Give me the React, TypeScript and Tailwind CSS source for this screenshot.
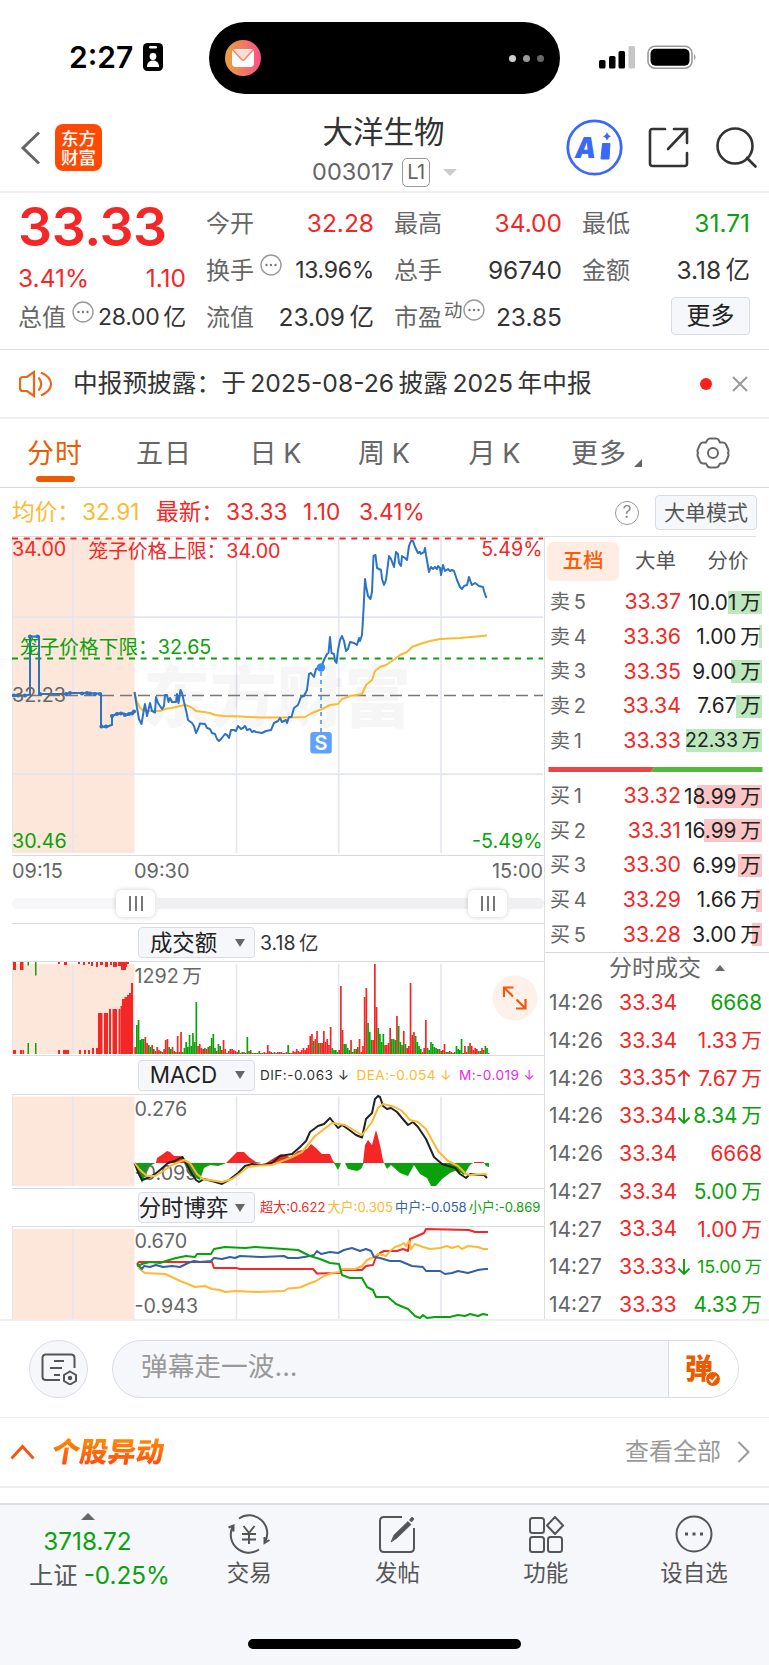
import type { ReactNode } from 'react';
import clsx from 'clsx';

const RED = '#f52626';
const GREEN = '#0aa20a';
const GRID = '#e3e6ee';
const YELLOW = '#fdb933';

// Thin gap where Chinese characters meet digits or latin letters
const spaced = (s: string) =>
  s.replace(/([\u4e00-\u9fff])([\dA-Z])/g, '$1\u2009$2').replace(/([\dA-Z])([\u4e00-\u9fff])/g, '$1\u2009$2');

/* ---------- data ---------- */

type Level = { side: string; price: string; amount: string; bar: number };

const asks: Level[] = [
  { side: '卖5', price: '33.37', amount: '10.01万', bar: 34 },
  { side: '卖4', price: '33.36', amount: '1.00万', bar: 3 },
  { side: '卖3', price: '33.35', amount: '9.00万', bar: 31 },
  { side: '卖2', price: '33.34', amount: '7.67万', bar: 26 },
  { side: '卖1', price: '33.33', amount: '22.33万', bar: 76 },
];

const bids: Level[] = [
  { side: '买1', price: '33.32', amount: '18.99万', bar: 65 },
  { side: '买2', price: '33.31', amount: '16.99万', bar: 58 },
  { side: '买3', price: '33.30', amount: '6.99万', bar: 24 },
  { side: '买4', price: '33.29', amount: '1.66万', bar: 6 },
  { side: '买5', price: '33.28', amount: '3.00万', bar: 10 },
];

const trades = [
  { time: '14:26', price: '33.34', amount: '6668', up: false },
  { time: '14:26', price: '33.34', amount: '1.33万', up: true },
  { time: '14:26', price: '33.35', amount: '7.67万', up: true, dir: 'up' },
  { time: '14:26', price: '33.34', amount: '8.34万', up: false, dir: 'down' },
  { time: '14:26', price: '33.34', amount: '6668', up: true },
  { time: '14:27', price: '33.34', amount: '5.00万', up: false },
  { time: '14:27', price: '33.34', amount: '1.00万', up: true },
  { time: '14:27', price: '33.33', amount: '15.00万', up: false, dir: 'down', small: true },
  { time: '14:27', price: '33.33', amount: '4.33万', up: false },
];

// Per-minute turnover, positive = red bar, negative = green bar
const volume = [
  7, -29, -34, -14, -15, -15, 17, 11, -9, -7, 9, -5, 3, 7, 4, -3, 2, 5, 14, 15, -7, -5, 7, 3, -2, 18, 2, 22, -2, -6,
  -12, -7, -19, -8, -21, -12, -52, 8, 10, 6, 5, -6, 5, 7, -8, -16, -20, -6, 3, -10, -8, 4, 14, 5, -1, 3, 5, 5, 4, 3,
  2, -4, 1, 2, -2, 1, -17, 3, -4, 1, 1, -1, 1, -3, 1, 1, 2, 1, 9, 3, 2, 1, -2, 1, 2, 2, 2, 1, 1, 2,
  -9, 1, 1, 3, 2, 5, 3, 2, 4, 6, 4, 6, 9, 18, 20, -13, 15, 23, -11, 11, 11, 23, 12, 15, 9, 27, -6, -4, -4, -2,
  4, 68, 24, -10, -10, -6, -4, 14, -2, -5, 5, -7, 15, 2, 8, 57, 66, -31, -22, -14, 14, 90, 47, -26, -20, -12, -20, 9, 9, 11,
  26, -15, -15, -14, 38, -28, -12, -9, 23, -10, 6, 8, 71, 19, 22, -18, -12, -8, -5, 2, 6, 34, -6, -4, -12, -10, -7, -6, -5, 5,
  -3, 4, 10, -2, -2, 3, 2, 1, -2, -8, -5, -4, -15, 1, 8, 2, -8, 11, 8, 4, 6, 5, -3, -3, 6, 4, -8, -6, -1,
];

// [x, width, height] bars of the call auction
const auctionRed = [
  [13, 3, 4], [20, 2, 4], [22.5, 1.5, 4], [58, 2, 4], [63, 6, 4], [79, 2, 4], [84, 2, 4], [88, 2, 4], [92, 2, 6], [96, 2, 6],
  [98, 4.5, 41], [104, 4, 41], [109, 2, 45], [112.5, 4.5, 45], [118.5, 2, 45], [120.5, 1.5, 48], [122, 3, 55],
  [124.5, 3, 57], [127, 2, 59], [129, 2, 61], [131, 2, 71],
];
const auctionTop = [
  [13, 3, 8], [20, 3.5, 8], [58, 2, 2], [64, 3, 3], [78, 2, 2], [83, 2, 3], [88, 2, 2], [91, 2, 4], [96, 2, 5],
  [100, 3, 3], [105, 3, 5], [110, 2, 3], [113, 4, 5], [118, 3, 4], [121, 5, 8], [125, 2, 5], [127, 2, 2],
];

const auctionLine =
  '12,695.5 26,695.5 30,694.5 30,636.5 39,636.5 39,694 60,694 66,694 70,693 80,693 97,693.5 101,694 101,727 108,726.5 110,725.5 112,725 112,716 118,713.5 124,713.5 127,715 130,713.5 132,714 135,711';
const auctionDots = [
  [14, 695.5], [18, 695.5], [25, 695.5], [30, 636.5], [37.5, 636.5], [40, 694], [66, 694], [70, 693], [82, 693.5], [87, 693],
  [90, 693.5], [95, 694], [100, 694], [101.5, 726.5], [106, 726.5], [112, 716], [117, 714], [121, 713.5], [125, 715],
  [129, 714], [132, 713.5], [134, 711.5],
];
const priceLine =
  '134.5,692 137,708 139,719 141.5,724 144,709 145,704 147,716 150,703 152,711 155,712.5 156,697 158,703 160,706 162,709 164,706 165,695 167,695 168.5,702 170,698 172,702 176,702 177,694 178.5,703 180.5,690 182,693 184,702 186,710 188,720 192,723 194,726 196,733 198,729 200,723.5 205,724 207,728 210,729 212,733 215,734 217,739 219,741 221,739 225,734 227,735 229,738 231,730 234,730 236,731 238,726 241,729 243,728 245,726 247,730 250,729 252,732 254,731 256,732 262,733 266,731 271,730 274,723 278,721 280,718 282,722 286,720 287,723 289,717 291.5,717 294,708 298,705 301,697 304,696 307,690 309,674 311,673 314,677 316,669 321,667 324,660 327,654 328.5,653 330,637 331.5,653 334,654 335,661 336.5,663 338,650 340,640 342,636 344,641 346,651 348,649 350,642 354,643 357,645 359,638 360,641 362,635 363.5,610 365,579 366,586 368,596 370.5,599 372,592 373.5,556 375.5,555 377,568 381,570 382,579 384,585 386,580 389,556 391,559 394,567 396,552 398,554 399,563 401,566 402,556 405,558 407,560 409,546 411,541 413,541 415,547 418,553 420,552 421,554 424,552 425,548 426,555 429,572 431,567 433,569 435,567 437,569 438,566 440,568 441,575 443,565 445,571 448,569 450,571 452,570 454,571 457,580 460,587 462,589 464,586 467,585 469,577 471,583 472,585 475,583 479,586 483,587 484,591 486,597 487,597.5';
const avgLine =
  '134.5,692 137,702 140,708 144,711 152,711 160,711 165,709 172,708 180,706 185,705 191,707 196,711 204,712 210,713 215,715 225,716 240,716.5 260,717.5 290,717.5 305,717 312,713 322,709 330,705 338,704 342,699 350,696 362,694 366,685 372,680 375,671 380,667 386,665 395,659 400,655 407,652 412,647 420,644 430,641 440,639 460,638 487,635.5';

const difLine =
  '134.5,1163 138,1172 142,1180 148,1178 155,1174 160,1170 168,1163 175,1161 180,1158 182.5,1157 187,1165 192,1174 196,1180 199,1182 204,1179 212,1181 222,1184 229,1180 238,1173 245,1166 252,1164 262,1165 272,1163 280,1156 292,1154 300,1147 306,1141 310,1132 318,1126 324,1124 330,1118 338,1128 342,1125 348,1129 356,1135 362,1137.5 366,1119 372,1113 375,1099 378,1096 380,1097 383,1106 387,1109 391,1108 397,1112 402,1118 408,1125 413,1122 418,1127 426,1139 434,1157 442,1164 455,1168 460,1174 466,1178 470,1174 478,1175 484,1175 487,1178';
const deaLine =
  '134.5,1163 140,1170 147,1176 155,1176 165,1170 172,1165 184,1160 190,1163 197,1174 203,1179 222,1182 232,1179 242,1172 248,1167 260,1165.5 272,1165 290,1158 302,1152 315,1136 332,1123 345,1125 362,1135 372,1122 378,1108 383,1104 395,1107 402,1111 410,1120 418,1122 426,1129 438,1151 448,1161 458,1166 466,1174 470,1175 485,1174 487,1175';
const macdUp = [
  '156,1163 157,1158 163,1154 167,1151 170,1152 174,1156 180,1156 184,1159 185,1163',
  '226,1163 231,1158 237,1152 244,1152 249,1157 256,1162 262,1163',
  '266,1163 274,1158 281,1154 290,1157 298,1151 307,1149 311,1144 316,1148 322,1154 330,1154 333,1161 335,1163',
  '363,1163 365,1145 368,1140 372,1145 376,1130 378,1137 380,1145 383,1160 384,1163',
  '474,1163 474,1162 484,1162 484,1163',
];
const macdDown = [
  '134,1163 138,1174 142,1183 147,1172 150,1166 155,1163',
  '184,1163 190,1176 196,1178 200,1180 204,1168 210,1165 218,1166 224,1164 226,1163',
  '334,1163 338,1170 341,1163',
  '345,1163 348,1169 357,1171 361,1169 364,1163',
  '384,1163 387,1169 391,1165 400,1173 408,1176 414,1165 420,1174 427,1178 431,1186 436,1186 442,1179 450,1173 457,1170 464,1175 470,1165 473,1163',
  '484,1163 486,1166 489,1167 489,1163',
];

const gameRed =
  '137,1264 139,1262 212,1262 214,1268 236,1268 240,1269 313,1269 317,1273.5 340,1273 342,1270 362,1270 366,1266 373,1265 376,1257 380,1253 384,1251 397,1251 403,1249 408,1251 410,1239 415,1237 424,1233 426,1229 469,1230 475,1232 488,1232';
const gameYellow =
  '138,1268 141,1270 145,1273 165,1274 172,1277 180,1281 188,1284 195,1287 205,1286 212,1289 220,1290 225,1292 236,1291 258,1292 270,1291.5 284,1291 288,1288.5 300,1287.5 308,1284 316,1281 324,1276 332,1273 340,1272 342,1269 355,1269 362,1266 367,1260 374,1257 378,1254 386,1256 390,1251 395,1247 401,1245 404,1243 406,1246 409,1241 411,1249 415,1244 423,1247 430,1249 440,1248 447,1246 452,1248 458,1246 462,1249 468,1246 478,1247 483,1249 488,1249';
const gameBlue =
  '137,1264 142,1269 144,1266 150,1267 156,1265 163,1267 172,1266 180,1267 188,1263 194,1261 200,1262 211,1261 214,1258 222,1259 230,1257 235,1258 240,1256 262,1257 284,1256 288,1258 298,1258 310,1256 314,1255 317,1251 321,1254 330,1252 338,1253 344,1250 352,1248 360,1251 366,1249 371,1251 374,1257 380,1258 390,1261 400,1261 412,1266 423,1267 426,1271 440,1271 445,1274 452,1273 458,1271 468,1273 478,1270 485,1269 488,1269';
const gameGreen =
  '137,1266 142,1264 150,1262 160,1263 166,1261 176,1258 186,1256 195,1257 197,1254 211,1254 214,1249 225,1247 245,1248 255,1247 270,1248 298,1250 310,1256 320,1259 330,1263 339,1264 342,1275 350,1278 362,1278 367,1287 373,1290 376,1297 388,1297 396,1304 408,1309 415,1316 420,1318 423,1315 427,1318 435,1317 450,1317 458,1315 465,1316 470,1314 478,1316 483,1314 488,1315';

/* ---------- small parts ---------- */

function MoreDots({ className }: { className?: string }) {
  return (
    <svg viewBox="0 0 22 22" className={clsx('h-[22px] w-[22px] shrink-0', className)} fill="none">
      <circle cx="11" cy="11" r="10" stroke="#999" strokeWidth="1.4" />
      <circle cx="6.5" cy="11" r="1.2" fill="#777" />
      <circle cx="11" cy="11" r="1.2" fill="#777" />
      <circle cx="15.5" cy="11" r="1.2" fill="#777" />
    </svg>
  );
}

type StatProps = { label: string; value: string; color?: string; icon?: ReactNode; tight?: boolean };

function Stat({ label, value, color = 'text-[#333]', icon, tight }: StatProps) {
  return (
    <div className="flex h-[47px] items-center justify-between text-[24px] whitespace-nowrap">
      <span className="flex items-center text-[#666]">
        {label}
        {icon}
      </span>
      <span className={clsx(color, tight ? 'text-[23px] tracking-[-0.3px]' : 'text-[24.5px]')}>{spaced(value)}</span>
    </div>
  );
}

function Poly({ points, color, width = 2 }: { points: string; color: string; width?: number }) {
  return <polyline points={points} fill="none" stroke={color} strokeWidth={width} strokeLinejoin="round" />;
}

// Pink auction zone with the time grid shared by all panels
function PanelGrid({ top, bottom }: { top: number; bottom: number }) {
  return (
    <>
      <rect x="12" y={top} width="122.5" height={bottom - top} fill="#fde6da" />
      {[73, 236.5, 338.7, 441].map((x) => (
        <line key={x} x1={x} x2={x} y1={top} y2={bottom} stroke={GRID} strokeWidth="1.6" />
      ))}
      <line x1="12.5" x2="12.5" y1={top - 2} y2={bottom} stroke={GRID} />
    </>
  );
}

/* ---------- header ---------- */

function StatusBar() {
  return (
    <div className="flex h-[116px] items-start">
      <div className="flex w-[209px] items-center gap-2.5 pt-[37px] pl-[69px]">
        <span className="text-[30px] leading-10 font-semibold text-black">2:27</span>
        <svg viewBox="0 0 20 28" className="h-7 w-5">
          <rect width="20" height="28" rx="4.5" fill="#000" />
          <rect x="6" y="3" width="8" height="2.4" rx="1.2" fill="#fff" />
          <circle cx="10" cy="13.5" r="3.4" fill="#fff" />
          <path d="M4 24c0-5 3-6.5 6-6.5s6 1.5 6 6.5z" fill="#fff" />
        </svg>
      </div>
      <div className="mt-[22px] flex h-[72px] w-[351px] items-center justify-between rounded-full bg-black px-4">
        <svg viewBox="0 0 36 36" className="h-9 w-9">
          <defs>
            <linearGradient id="mail" x1="0" x2="1">
              <stop offset="0" stopColor="#e8a33c" />
              <stop offset="1" stopColor="#fd4f87" />
            </linearGradient>
          </defs>
          <circle cx="18" cy="18" r="18" fill="url(#mail)" />
          <rect x="7" y="9" width="22" height="18" rx="4" fill="#fff" />
          <path d="M8 10l8.5 9.5q1.5 1.5 3 0L28 10" fill="#fddcd5" stroke="#f47c62" strokeWidth="1.3" />
        </svg>
        <div className="flex gap-[7px]">
          <span className="h-[7px] w-[7px] rounded-full bg-[#d0d0d0]" />
          <span className="h-[7px] w-[7px] rounded-full bg-[#9a9a9a]" />
          <span className="h-[7px] w-[7px] rounded-full bg-[#686868]" />
        </div>
      </div>
      <svg viewBox="0 0 100 24" className="mt-[45px] ml-[39px] h-6 w-[100px]">
        <rect x="0" y="15" width="6.5" height="8.5" rx="1.6" />
        <rect x="10" y="11" width="6.5" height="12.5" rx="1.6" />
        <rect x="19.5" y="6" width="6.5" height="17.5" rx="1.6" />
        <rect x="29.5" y="1" width="6.5" height="22.5" rx="1.6" fill="#c6c6c6" />
        <rect x="49" y="1.2" width="44" height="22" rx="7" fill="none" stroke="#999" strokeWidth="1.6" />
        <rect x="51.5" y="3.8" width="39" height="17" rx="5" />
        <path d="M95 9q3 3 0 6.500z" fill="#999" />
      </svg>
    </div>
  );
}

function Header() {
  return (
    <div className="flex h-[77px] justify-between border-b-2 border-[#eee]">
      <div className="flex w-[240px] items-start gap-3.5 pt-2 pl-5">
        <svg viewBox="0 0 21 34" className="mt-[7px] h-[34px] w-[21px]" fill="none" stroke="#666" strokeWidth="3">
          <path d="M19 1.5L3 17l16 15.5" />
        </svg>
        <div className="flex h-[47px] w-[47px] flex-col items-center justify-center rounded-lg bg-[#ff4a05] text-[17.5px] leading-[19px] font-medium text-white">
          <span>东方</span>
          <span>财富</span>
        </div>
      </div>
      <div className="flex flex-col items-center text-[#333]">
        <div className="mr-0.5 text-[30.5px] leading-8">大洋生物</div>
        <div className="mt-2 flex items-center text-[23.5px] leading-8 text-[#666]">
          003017
          <span className="ml-2 flex h-[29px] w-7 items-center justify-center rounded-[5px] border-[1.5px] border-[#999] text-[20px] tracking-tight">L1</span>
          <span className="ml-[13px] border-x-[7px] border-t-[7px] border-x-transparent border-t-[#ccc]" />
        </div>
      </div>
      <div className="flex w-[240px] items-start justify-end pr-[11px]">
        <svg viewBox="0 0 57 57" className="mt-[3px] h-[57px] w-[57px]">
          <circle cx="28.5" cy="28.5" r="26.7" fill="none" stroke="#3a68f8" strokeWidth="2.8" />
          <text x="9" y="38.5" fontSize="29" fontWeight="900" fontStyle="italic" fill="#3a68f8" textLength="21" lengthAdjust="spacingAndGlyphs">
            A
          </text>
          <path d="M36.5 24.5h7.5l-1 15.500h-8z" fill="#3a68f8" strokeLinejoin="round" stroke="#3a68f8" />
          <path d="M41 13q1 3.500 4 4.200-3 1-4 4.200-1-3.200-4-4.200 3-.7 4-4.200z" fill="#3a68f8" />
        </svg>
        <svg viewBox="0 0 42 42" className="mt-[11px] ml-[25px] h-[42px] w-[42px]" fill="none" stroke="#333" strokeWidth="2.6" strokeLinecap="round">
          <path d="M17 2H4.500Q2 2 2 4.500v32Q2 39 4.500 39h32q2.500 0 2.500-2.500V26M26 2h13v14M38.500 2.500L20 22" />
        </svg>
        <svg viewBox="0 0 42 42" className="mt-[11px] ml-[26px] h-[42px] w-[42px]" fill="none" stroke="#333" strokeWidth="2.6" strokeLinecap="round">
          <circle cx="19" cy="19" r="17.5" />
          <path d="M31 31l8.500 8.500" />
        </svg>
      </div>
    </div>
  );
}

function Quote() {
  return (
    <div className="flex h-[157px] justify-between border-b border-[#ddd] pt-[7px] pr-[19px] pl-[18px]">
      <div className="w-[168px]">
        <div className="h-[56px] text-[53.5px] leading-[53px] font-semibold tracking-[-0.4px] text-[#f52626]">33.33</div>
        <div className="flex h-[38px] items-end justify-between text-[24.5px] leading-[32px] text-[#f52626]">
          <span>3.41%</span>
          <span>1.10</span>
        </div>
        <Stat label="总值" value="28.00亿" icon={<MoreDots className="mb-3 ml-1.5" />} tight />
      </div>
      <div className="w-[168px]">
        <Stat label="今开" value="32.28" color="text-[#f52626]" />
        <Stat label="换手" value="13.96%" icon={<MoreDots className="mb-3 ml-1.5" />} tight />
        <Stat label="流值" value="23.09亿" />
      </div>
      <div className="w-[168px]">
        <Stat label="最高" value="34.00" color="text-[#f52626]" />
        <Stat label="总手" value="96740" />
        <Stat
          label="市盈"
          value="23.85"
          icon={
            <span className="mb-4 ml-0.5 flex items-center text-[18.5px] leading-5">
              动<MoreDots />
            </span>
          }
        />
      </div>
      <div className="w-[168px]">
        <Stat label="最低" value="31.71" color="text-[#0aa20a]" />
        <Stat label="金额" value="3.18亿" />
        <button className="mt-[3px] ml-auto flex h-[38px] w-[79px] items-center justify-center rounded border border-[#d9dce6] bg-[#f6f7fa] text-[24px] text-[#222]">
          更多
        </button>
      </div>
    </div>
  );
}

function Notice() {
  return (
    <div className="flex h-[69px] items-center border-b-2 border-[#eee] pr-[21px] pl-[19px] text-[#333]">
      <svg viewBox="0 0 34 28" className="h-7 w-[34px]" fill="none" stroke="#f06418" strokeWidth="2.2">
        <path d="M15 2v24l-7-5H4q-3 0-3-3v-8q0-3 3-3h4zM19.5 7.500q5.500 6.500 0 13M22 2.500q10 4.500 10 11.500t-10 11.500" />
      </svg>
      <span className="ml-5 text-[24.7px] whitespace-nowrap">{spaced('中报预披露：于2025-08-26披露2025年中报')}</span>
      <span className="ml-auto h-3 w-3 rounded-full bg-[#fa2020]" />
      <svg viewBox="0 0 16 16" className="ml-5 h-4 w-4" stroke="#999" strokeWidth="2">
        <path d="M1 1l14 14M15 1L1 15" />
      </svg>
    </div>
  );
}

function PeriodTabs() {
  return (
    <div className="flex h-[69px] border-b border-[#d5d7de] text-[27px] leading-[70px] tracking-[1px] text-[#666]">
      <div className="flex w-[110px] flex-col items-center text-[#ee5a00]">
        <span className="h-[57px]">分时</span>
        <span className="h-1.5 w-[39px] rounded-full bg-[#ee5a00]" />
      </div>
      <span className="w-[108px] text-center">五日</span>
      <span className="w-[116px] text-center">{spaced('日K')}</span>
      <span className="w-[101px] text-center">{spaced('周K')}</span>
      <span className="w-[120px] text-center">{spaced('月K')}</span>
      <span className="ml-4">更多</span>
      <svg viewBox="0 0 8 8" className="mt-[40px] ml-[7px] h-2 w-2" fill="#666">
        <path d="M8 0v8H0z" />
      </svg>
      <svg viewBox="0 0 34 32" className="mt-[18px] ml-[54px] h-8 w-[34px]" fill="none" stroke="#666" strokeWidth="2">
        <path
          d="M11 3.5q1-2 3-2h6q2 0 3 2l1 2 3 0q2 0 3 2l2 4.500q1 2 0 4l0 0q1 2 0 4l-2 4.500q-1 2-3 2h-3l-1 2q-1 2-3 2h-6q-2 0-3-2l-1-2H7q-2 0-3-2l-2-4.500q-1-2 0-4-1-2 0-4L4 7.500q1-2 3-2h3z"
          strokeLinejoin="round"
        />
        <circle cx="17" cy="16" r="5" />
      </svg>
    </div>
  );
}

/* ---------- charts ---------- */

function PriceChart() {
  return (
    <svg viewBox="0 536 544 322" className="block h-[322px] w-[544px]">
      <PanelGrid top={538} bottom={853} />
      <path d="M12 536.5h532M12 855.5h532" stroke="#d8dae2" />
      <path d="M12 617.2h531M12 774.2h531" stroke={GRID} strokeWidth="1.7" />
      <text x="143" y="722" fontSize="67" fontWeight="900" fill="#000" opacity="0.03">东方财富</text>
      <line x1="12" x2="543" y1="538.5" y2="538.5" stroke={RED} strokeWidth="2" strokeDasharray="6 5.7" />
      <line x1="12" x2="543" y1="658.5" y2="658.5" stroke={GREEN} strokeWidth="1.8" strokeDasharray="6 5.7" />
      <line x1="12" x2="543" y1="695.5" y2="695.5" stroke="#777" strokeWidth="1.5" strokeDasharray="12 6" />
      <Poly points={auctionLine} color="#2c73c6" />
      {auctionDots.map(([x, y]) => (
        <circle key={x} cx={x} cy={y} r="2.1" fill="#2c73c6" />
      ))}
      <Poly points={avgLine} color={YELLOW} />
      <Poly points={priceLine} color="#2c73c6" />
      <line x1="321" x2="321" y1="672" y2="732" stroke="#5a9ff8" strokeWidth="1.8" strokeDasharray="4 4" />
      <circle cx="321" cy="667.5" r="4.2" fill="#388cf5" />
      <rect x="310.3" y="732" width="21.5" height="21.5" rx="3" fill="#5fa2fb" />
      <text x="321" y="750" textAnchor="middle" fontSize="20" fontWeight="600" fill="#fff">S</text>
      <g fontSize="19.7">
        <text x="12" y="556" fill={RED}>34.00</text>
        <text x="88.5" y="557.5" fill={RED}>笼子价格上限：34.00</text>
        <text x="542.5" y="556" textAnchor="end" fill={RED}>5.49%</text>
        <text x="20" y="654" fill={GREEN}>笼子价格下限：32.65</text>
        <text x="12" y="702" fill="#666">32.23</text>
        <text x="12" y="848" fill={GREEN}>30.46</text>
        <text x="542.5" y="848" textAnchor="end" fill={GREEN}>-5.49%</text>
      </g>
    </svg>
  );
}

function RangeSlider() {
  const handle = (
    <>
      <i className="h-[15px] w-0.5 bg-[#777]" />
      <i className="h-[15px] w-0.5 bg-[#777]" />
      <i className="h-[15px] w-0.5 bg-[#777]" />
    </>
  );
  const handleClass = 'flex h-[27px] w-[39px] items-center justify-center gap-1 rounded-md bg-white shadow-[0_0_5px_rgba(0,0,0,0.2)]';
  return (
    <div className="flex h-9 items-center pl-3">
      <div className="h-[11px] w-[104px] rounded-l-full bg-[#f7f7fa]" />
      <div className={handleClass}>{handle}</div>
      <div className="h-[11px] w-[313px] bg-[#f0f0f3]" />
      <div className={handleClass}>{handle}</div>
      <div className="h-[11px] flex-1 rounded-r-full bg-[#f0f0f3]" />
    </div>
  );
}

function IndicatorBar({ name, children, className }: { name: string; children: ReactNode; className?: string }) {
  return (
    <div className={clsx('ml-3 flex items-center border-y border-[#d9dbe2] pl-[126px] whitespace-nowrap', className)}>
      <button className="flex h-[31px] w-[117px] shrink-0 items-center rounded border border-[#d9dce6] bg-[#f6f7fa] text-[22.4px] leading-7 text-[#222]">
        <span className="flex w-[89px] justify-center">{name}</span>
        <span className="ml-[7px] border-x-[5px] border-t-[8px] border-x-transparent border-t-[#666]" />
      </button>
      {children}
    </div>
  );
}

function VolumeChart() {
  return (
    <svg viewBox="0 962 544 93" className="block h-[93px] w-[544px]">
      <PanelGrid top={964} bottom={1054} />
      {auctionTop.map(([x, w, h]) => (
        <rect key={x} x={x} y="962" width={w} height={h} fill={RED} />
      ))}
      {auctionRed.map(([x, w, h]) => (
        <rect key={x} x={x} y={1054 - h} width={w} height={h} fill={RED} />
      ))}
      <path d="M27.5 962h1.500v3.500h-1.500zM35 962h1.500v13.500H35zM27.500 1043h1.500v11h-1.500zM35 1043h1.500v11H35z" fill={GREEN} />
      {volume.map((v, i) => (
        <rect key={i} x={134.3 + i * 1.7} y={1054 - Math.abs(v)} width="1.7" height={Math.abs(v)} fill={v > 0 ? RED : GREEN} />
      ))}
      <text x="134.5" y="983" fontSize="19.7" fill="#666">{spaced('1292万')}</text>
      <circle cx="515" cy="998" r="22.5" fill="#fdf1ea" />
      <path d="M504 997v-9.500h9.500M504.500 988l8.500 8.500M525.500 999v9.500H516M525 1008l-8.500-8.500" fill="none" stroke="#ee5a10" strokeWidth="2.2" />
    </svg>
  );
}

function MacdChart() {
  return (
    <svg viewBox="0 1095 544 93" className="block h-[93px] w-[544px]">
      <PanelGrid top={1096.5} bottom={1186} />
      {macdUp.map((p) => (
        <polygon key={p} points={p} fill={RED} />
      ))}
      {macdDown.map((p) => (
        <polygon key={p} points={p} fill={GREEN} />
      ))}
      <text x="134.5" y="1115.5" fontSize="19.7" fill="#666">0.276</text>
      <text x="134.5" y="1180" fontSize="19.7" fill="#666">-0.099</text>
      <Poly points={difLine} color="#222" />
      <Poly points={deaLine} color={YELLOW} />
    </svg>
  );
}

function GameChart() {
  return (
    <svg viewBox="0 1227 544 93" className="block h-[93px] w-[544px]">
      <PanelGrid top={1229} bottom={1319} />
      <Poly points={gameRed} color={RED} />
      <Poly points={gameYellow} color={YELLOW} />
      <Poly points={gameBlue} color="#34619f" />
      <Poly points={gameGreen} color={GREEN} />
      <text x="134.5" y="1248" fontSize="19.7" fill="#666">0.670</text>
      <text x="134.5" y="1312.5" fontSize="19.7" fill="#666">-0.943</text>
    </svg>
  );
}

/* ---------- order book ---------- */

function LevelRow({ level, ask }: { level: Level; ask?: boolean }) {
  return (
    <div className="flex h-[34.6px] items-center pr-[7px] pl-[5px] text-[20.8px] whitespace-nowrap">
      <span className="w-[44px] text-[20px] text-[#666]">{spaced(level.side)}</span>
      <span className="w-[87px] text-right text-[21.3px] text-[#f52626]">{level.price}</span>
      <span
        className="ml-auto flex h-[23px] w-20 items-center justify-end text-[#222]"
        style={{ background: `linear-gradient(${ask ? '#bde8bd,#bde8bd' : '#fcc5c5,#fcc5c5'}) right / ${level.bar}px 100% no-repeat` }}
      >
        <span className={clsx('pr-px', level.amount === '22.33万' && 'text-[19.5px]')}>{spaced(level.amount)}</span>
      </span>
    </div>
  );
}

function OrderBook() {
  return (
    <div className="w-[225px] border-l border-[#dddfe5]">
      <div className="mr-[13px] border-t border-[#dddfe5]" />
      <div className="flex h-12 items-center pl-[2px] text-[20.5px] text-[#555]">
        <span className="flex h-[39px] w-[72px] items-center justify-center rounded-md bg-[#ffede3] font-medium text-[#fd5a05]">五档</span>
        <span className="w-[73px] text-center">大单</span>
        <span className="w-[72px] text-center">分价</span>
      </div>
      {asks.map((l) => (
        <LevelRow key={l.side} level={l} ask />
      ))}
      <svg viewBox="0 0 214 5" className="mt-[9px] mb-[7px] ml-[3px] block h-[5px] w-[215px]">
        <path d="M0 0h106l-4 5H0z" fill="#e94646" />
        <path d="M106 0h108v5H102z" fill="#53b83e" />
      </svg>
      {bids.map((l) => (
        <LevelRow key={l.side} level={l} />
      ))}
      <div className="flex h-[32px] items-center justify-center border-t border-[#d5d7de] pl-5 text-[23px] text-[#666]">
        分时成交
        <span className="ml-[14px] border-x-[5px] border-b-[6px] border-x-transparent border-b-[#666]" />
      </div>
      {trades.map((t, i) => (
        <div key={i} className="flex h-[37.75px] items-center pr-[7px] pl-1 text-[21px] whitespace-nowrap">
          <span className="w-[70px] text-[#666]">{t.time}</span>
          <span className="w-[58px] text-[21.3px] text-[#f52626]">{t.price}</span>
          <svg viewBox="0 0 14 18" className="h-[18px] w-[14px] shrink-0" fill="none" stroke={t.up ? RED : GREEN} strokeWidth="1.9">
            {t.dir === 'up' && <path d="M7 17V2M1.5 7.500L7 2l5.500 5.500" />}
            {t.dir === 'down' && <path d="M7 1v15M1.5 10.500L7 16l5.500-5.500" />}
          </svg>
          <span
            className={clsx(
              'flex-1 text-right',
              t.up ? 'text-[#f52626]' : 'text-[#0aa20a]',
              t.small ? 'text-[17.5px]' : 'text-[20.8px]',
            )}
          >
            {spaced(t.amount)}
          </span>
        </div>
      ))}
    </div>
  );
}

function ChartArea() {
  return (
    <div className="h-[833px] overflow-hidden border-b-2 border-[#eee]">
      <div className="flex h-12 items-center pt-px pr-[12px] pl-3 text-[22.7px] whitespace-nowrap text-[#f52626]">
        <span className="flex w-[144px] text-[#fdb933]">
          <span className="w-[70px]">均价：</span>32.91
        </span>
        <span className="flex w-[147px]">
          <span className="w-[70px]">最新：</span>33.33
        </span>
        <span className="w-[56px]">1.10</span>
        <span>3.41%</span>
        <span className="ml-auto flex h-6 w-6 items-center justify-center rounded-full border-[1.5px] border-[#999] text-[17px] text-[#888]">?</span>
        <button className="ml-4 flex h-[35px] w-[102px] items-center justify-center rounded border border-[#d9dce6] bg-[#f6f7fa] text-[21px] text-[#555]">
          大单模式
        </button>
      </div>
      <div className="flex">
        <div className="w-[544px] shrink-0">
          <PriceChart />
          <div className="flex h-[27px] items-center pl-3 text-[19.9px] text-[#666]">
            <span className="w-[122px]">09:15</span>
            <span>09:30</span>
            <span className="ml-auto pr-px">15:00</span>
          </div>
          <RangeSlider />
          <div className="h-[2px]" />
          <IndicatorBar name="成交额" className="h-[39px]">
            <span className="ml-[5px] pt-0.5 text-[19.5px] text-[#333]">{spaced('3.18亿')}</span>
          </IndicatorBar>
          <VolumeChart />
          <IndicatorBar name="MACD" className="h-[40px]">
            <span className="flex gap-[7px] pl-[5px] text-[13.6px] tracking-[0.45px]">
              <span className="text-[#333]">DIF:-0.063 ↓</span>
              <span className="text-[#fdb933]">DEA:-0.054 ↓</span>
              <span className="text-[#e82ae8]">M:-0.019 ↓</span>
            </span>
          </IndicatorBar>
          <MacdChart />
          <IndicatorBar name="分时博弈" className="h-[39px]">
            <span className="flex gap-[2px] pl-[5px] text-[13.1px]">
              <span className="text-[#f52626]">超大:0.622</span>
              <span className="text-[#fdb933]">大户:0.305</span>
              <span className="text-[#34619f]">中户:-0.058</span>
              <span className="text-[#0aa20a]">小户:-0.869</span>
            </span>
          </IndicatorBar>
          <GameChart />
        </div>
        <OrderBook />
      </div>
    </div>
  );
}

/* ---------- bottom ---------- */

function DanmuBar() {
  return (
    <div className="flex h-[97px] items-center border-b border-[#eee] pl-[29px]">
      <div className="flex h-[58px] w-[59px] items-center justify-center rounded-full border border-[#dcdee5] bg-[#f6f7fa]">
        <svg viewBox="0 0 36 32" className="h-8 w-9" fill="none" stroke="#555" strokeWidth="2">
          <path d="M19 27H5q-3.5 0-3.500-3.500V5Q1.500 1.500 5 1.500h25Q33.500 1.500 33.500 5v10M13 8h10M9 15h12M13 22h6" />
          <path d="M29 18.5l6 3.500v6l-6 3.500-6-3.500v-6z" />
          <circle cx="29" cy="25" r="1.2" fill="#555" />
        </svg>
      </div>
      <div className="ml-6 flex h-[58px] w-[627px] overflow-hidden rounded-full border border-[#d9dce2] bg-[#f6f7fa]">
        <span className="flex-1 pl-[28px] text-[26.7px] leading-[51px] text-[#999]">弹幕走一波...</span>
        <div className="flex w-[70px] items-center border-l border-[#d9dce2] bg-white pl-4">
          <span className="text-[28px] font-black text-[#ee5a00]">弹</span>
          <svg viewBox="0 0 16 16" className="mt-5 -ml-2 h-4 w-4">
            <circle cx="8" cy="8" r="7.5" fill="#ee5a00" stroke="#fff" />
            <path d="M4.5 8l2.500 3 4.500-5.500" fill="none" stroke="#fff" strokeWidth="1.8" />
          </svg>
        </div>
      </div>
    </div>
  );
}

function MovesSection() {
  return (
    <div className="flex h-[70px] items-center border-b-2 border-[#eee] pr-[19px] pl-[10px]">
      <svg viewBox="0 0 25 16" className="h-4 w-[25px]" fill="none" stroke="#ee5a10" strokeWidth="3">
        <path d="M1.5 14.500l11-12 11 12" />
      </svg>
      <span className="ml-[17px] -skew-x-[9deg] bg-linear-to-b from-[#ff8a00] from-20% to-[#ff4a10] to-80% bg-clip-text text-[28px] font-black text-transparent">
        个股异动
      </span>
      <span className="ml-auto text-[24px] text-[#999]">查看全部</span>
      <svg viewBox="0 0 13 22" className="ml-4 h-[22px] w-[13px]" fill="none" stroke="#999" strokeWidth="2">
        <path d="M1.5 1l10 10-10 10" />
      </svg>
    </div>
  );
}

function NavItem({ label, children }: { label: string; children: ReactNode }) {
  return (
    <div className="flex w-[148.3px] flex-col items-center pt-[9px] text-[22.5px] text-[#555]">
      <svg viewBox="0 0 44 40" className="h-10 w-11" fill="none" stroke="#555" strokeWidth="2">
        {children}
      </svg>
      <span className="mt-[2px] leading-[34px]">{label}</span>
    </div>
  );
}

function BottomNav() {
  return (
    <div className="h-[162px] border-t-2 border-[#dcdee3] bg-[#f6f7fa]">
      <div className="flex h-[134px]">
        <div className="flex w-[175px] flex-col items-center pt-2">
          <span className="border-x-[7px] border-b-[7px] border-x-transparent border-b-[#666]" />
          <span className="mt-1 text-[24.3px] leading-[34px] text-[#0aa20a]">3718.72</span>
          <span className="ml-6 text-[24.3px] leading-[35px] whitespace-nowrap text-[#555]">
            上证<span className="ml-1.5 text-[#0aa20a]">-0.25%</span>
          </span>
        </div>
        <NavItem label="交易">
          <path d="M12 4.500A18 18 0 0 1 38 28M32 35.500A18 18 0 0 1 6 12M1.500 13.500l5-2v6M42.500 26l-5 3v-6" />
          <path d="M16.500 12l5.500 7 5.500-7M22 19v11M15 20h14M15 25.500h14" />
        </NavItem>
        <NavItem label="发帖">
          <path d="M27 3H9Q5 3 5 7v27q0 4 4 4h26q4 0 4-4V14" />
          <path d="M16 28l3-7L33 7.500l3 3L22 24zM34.500 6l2.500-3 2 2-2.500 3z" fill="#555" strokeWidth="0.8" />
        </NavItem>
        <NavItem label="功能">
          <rect x="6" y="4" width="14" height="15" rx="2.5" />
          <rect x="6" y="23" width="14" height="15" rx="2.5" />
          <rect x="24" y="23" width="14" height="15" rx="2.5" />
          <path d="M31 3l8 8.500-8 8.500-8-8.500z" strokeLinejoin="round" />
        </NavItem>
        <NavItem label="设自选">
          <circle cx="22" cy="20" r="17.5" />
          <path d="M13 20h3M20.500 20h3M28 20h3" strokeWidth="3" />
        </NavItem>
      </div>
      <div className="mx-auto h-[10px] w-[273px] rounded-full bg-black" />
    </div>
  );
}

export default function App() {
  return (
    <div className="flex h-[1665px] w-[769px] flex-col overflow-hidden bg-white font-['Inter','Noto_Sans_CJK_SC',sans-serif]">
      <StatusBar />
      <Header />
      <Quote />
      <Notice />
      <PeriodTabs />
      <ChartArea />
      <DanmuBar />
      <MovesSection />
      <div className="flex-1" />
      <BottomNav />
    </div>
  );
}
